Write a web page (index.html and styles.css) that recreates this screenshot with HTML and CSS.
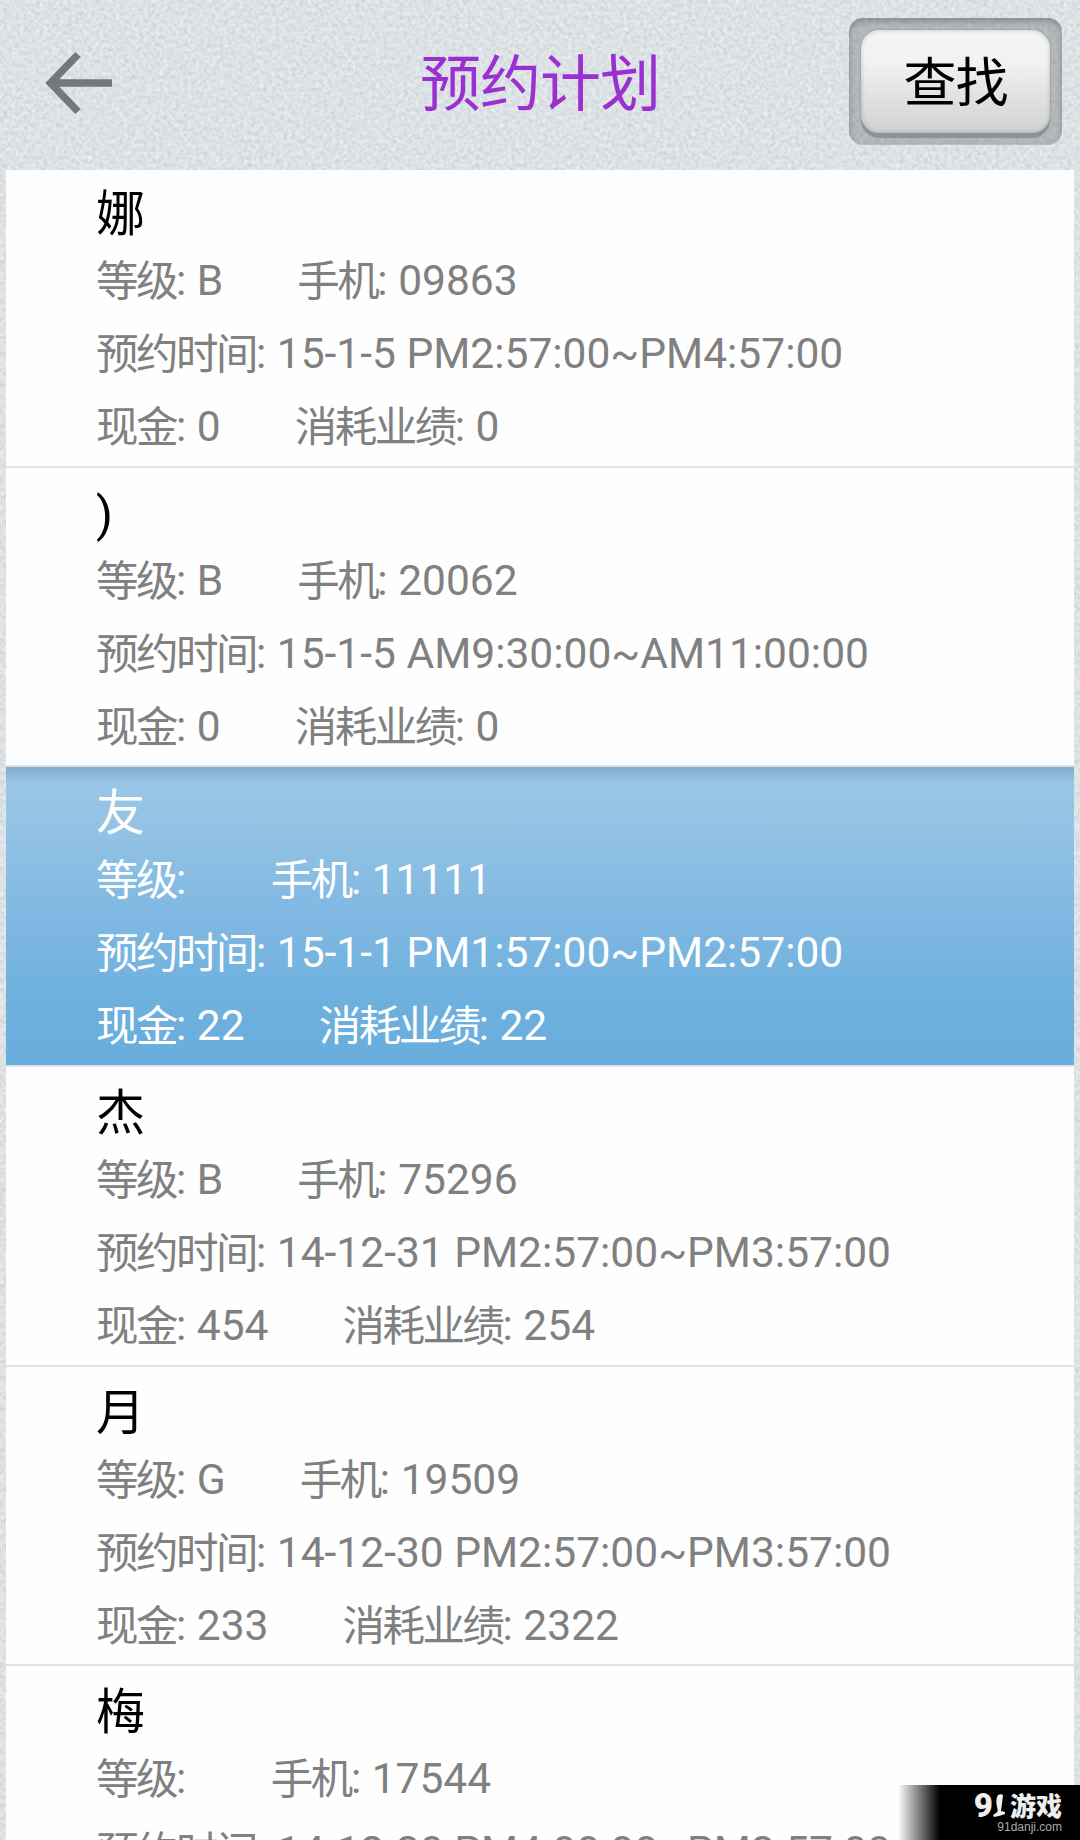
FILE: index.html
```html
<!DOCTYPE html>
<html lang="zh-CN">
<head>
<meta charset="utf-8">
<title>预约计划</title>
<link rel="stylesheet" href="styles.css">
</head>
<body>
<svg class="texture" width="1080" height="1840" aria-hidden="true">
  <filter id="grain" x="0" y="0" width="100%" height="100%" color-interpolation-filters="sRGB">
    <feTurbulence type="fractalNoise" baseFrequency="0.25" numOctaves="2" seed="7"/>
    <feColorMatrix values="0.18 0.06 0 0 0.743  0.15 0.05 0 0 0.785  0.13 0.04 0 0 0.81  0 0 0 0 1"/>
  </filter>
  <rect width="1080" height="1840" filter="url(#grain)"/>
</svg>
<div class="screen">
  <header class="bar">
    <svg class="back" width="70" height="66" viewBox="0 0 70 66"><path d="M35 4.500L7.500 33L35 61.500M7 33H69" fill="none" stroke="#757779" stroke-width="7.500"/></svg>
    <h1 class="title">预约计划</h1>
    <div class="search-well"><button class="search">查找</button></div>
  </header>
  <main class="list">
    <article class="item">
      <h2 class="name">娜</h2>
      <p class="line"><span><b>等级</b>: B</span><span><b>手机</b>: 09863</span></p>
      <p class="line"><span><b>预约时间</b>: 15-1-5 PM2:57:00~PM4:57:00</span></p>
      <p class="line"><span><b>现金</b>: 0</span><span><b>消耗业绩</b>: 0</span></p>
    </article>
    <article class="item">
      <h2 class="name">)</h2>
      <p class="line"><span><b>等级</b>: B</span><span><b>手机</b>: 20062</span></p>
      <p class="line"><span><b>预约时间</b>: 15-1-5 AM9:30:00~AM11:00:00</span></p>
      <p class="line"><span><b>现金</b>: 0</span><span><b>消耗业绩</b>: 0</span></p>
    </article>
    <article class="item selected">
      <h2 class="name">友</h2>
      <p class="line"><span><b>等级</b>: </span><span><b>手机</b>: 11111</span></p>
      <p class="line"><span><b>预约时间</b>: 15-1-1 PM1:57:00~PM2:57:00</span></p>
      <p class="line"><span><b>现金</b>: 22</span><span><b>消耗业绩</b>: 22</span></p>
    </article>
    <article class="item">
      <h2 class="name">杰</h2>
      <p class="line"><span><b>等级</b>: B</span><span><b>手机</b>: 75296</span></p>
      <p class="line"><span><b>预约时间</b>: 14-12-31 PM2:57:00~PM3:57:00</span></p>
      <p class="line"><span><b>现金</b>: 454</span><span><b>消耗业绩</b>: 254</span></p>
    </article>
    <article class="item">
      <h2 class="name">月</h2>
      <p class="line"><span><b>等级</b>: G</span><span><b>手机</b>: 19509</span></p>
      <p class="line"><span><b>预约时间</b>: 14-12-30 PM2:57:00~PM3:57:00</span></p>
      <p class="line"><span><b>现金</b>: 233</span><span><b>消耗业绩</b>: 2322</span></p>
    </article>
    <article class="item">
      <h2 class="name">梅</h2>
      <p class="line"><span><b>等级</b>: </span><span><b>手机</b>: 17544</span></p>
      <p class="line"><span><b>预约时间</b>: 14-12-30 PM4:00:00~PM3:57:00</span></p>
    </article>
  </main>
</div>
<aside class="watermark">
  <div class="brand"><span class="nine">9</span><svg width="13" height="24" viewBox="0 0 13 24"><path d="M5 1C7 0 10 0 10 2L8 17L12 18V20L6 22L1 23L0 21L3 19C5 18 5 16 4 13C3 9 3 4 5 1Z" fill="#eee"/></svg><span class="game">游戏</span></div>
  <div class="site">91danji.com</div>
</aside>
</body>
</html>
```
FILE: styles.css
```css
* { box-sizing: border-box; margin: 0; padding: 0; }
body {
  width: 1080px;
  height: 1840px;
  overflow: hidden;
  position: relative;
  background: #dde3e6;
  font-family: Roboto, "Noto Sans CJK SC", sans-serif;
}
.texture { position: absolute; left: 0; top: 0; }
.screen { position: relative; height: 1840px; overflow: hidden; }
.bar {
  height: 170px;
  display: grid;
  grid-template-columns: 250px 1fr 250px;
  align-items: start;
}
.back { margin: 50px 0 0 43px; }
.title {
  font-size: 61px;
  line-height: 80px;
  font-weight: 400;
  letter-spacing: -1px;
  color: #9a2fd2;
  text-align: center;
  margin-top: 45px;
}
.search-well {
  width: 213px;
  height: 127px;
  margin: 18px 0 0 19px;
  padding: 12px 12px 11px;
  border-radius: 14px;
  background: rgba(100, 104, 107, .35);
  box-shadow: inset 0 3px 6px rgba(0, 0, 0, .25), inset 0 -1px 1px rgba(255, 255, 255, .2);
}
.search {
  display: block;
  width: 189px;
  height: 103px;
  padding-top: 4px;
  border: 0;
  border-radius: 18px;
  background: linear-gradient(#f4f4f4, #f2f2f2 30%, #d0d1d2);
  box-shadow: 0 5px 1px #8f9193, inset 0 0 5px rgba(0, 0, 0, .2), 0 0 2px #888;
  font: 400 53px/80px Roboto, "Noto Sans CJK SC", sans-serif;
  letter-spacing: -1px;
  color: #000;
}
.list { margin: 0 6px; background: #fefefe; }
.item {
  height: 299.6px;
  padding: 15px 0 0 90px;
  border-bottom: 2px solid #e2e2e2;
  color: #808080;
}
.item:first-child { height: 297.8px; padding-top: 13px; }
.name {
  height: 61px;
  font-size: 49px;
  line-height: 64px;
  font-weight: 400;
  color: #000;
}
.line {
  display: flex;
  gap: 74px;
  height: 73px;
  font-size: 42.5px;
  line-height: 73px;
  white-space: pre;
}
.line b { font-weight: 400; letter-spacing: -2.5px; vertical-align: -1px; line-height: 1; }
.selected {
  color: #fff;
  background:
    linear-gradient(rgba(70, 90, 110, .25), rgba(70, 90, 110, 0) 16px),
    linear-gradient(#9ac6e7, #96c4e5 15%, #7cb6e1 56%, #6db0de 80%, #69addd);
}
.selected .name { color: #fff; }
.watermark {
  position: absolute;
  right: 0;
  bottom: 0;
  width: 182px;
  height: 55px;
  padding: 7px 18px 0 0;
  background: linear-gradient(90deg, transparent, #000 42px);
  display: flex;
  flex-direction: column;
  align-items: flex-end;
}
.brand { display: flex; align-items: center; height: 27px; color: #eee; }
.nine { font: 900 33px/27px Roboto, sans-serif; }
.game { font: 900 26px/25px "Noto Sans CJK SC", sans-serif; height: 27px; margin-left: 4px; }
.site { font: 12px/17px "Liberation Sans", sans-serif; color: #aaa; }
```
